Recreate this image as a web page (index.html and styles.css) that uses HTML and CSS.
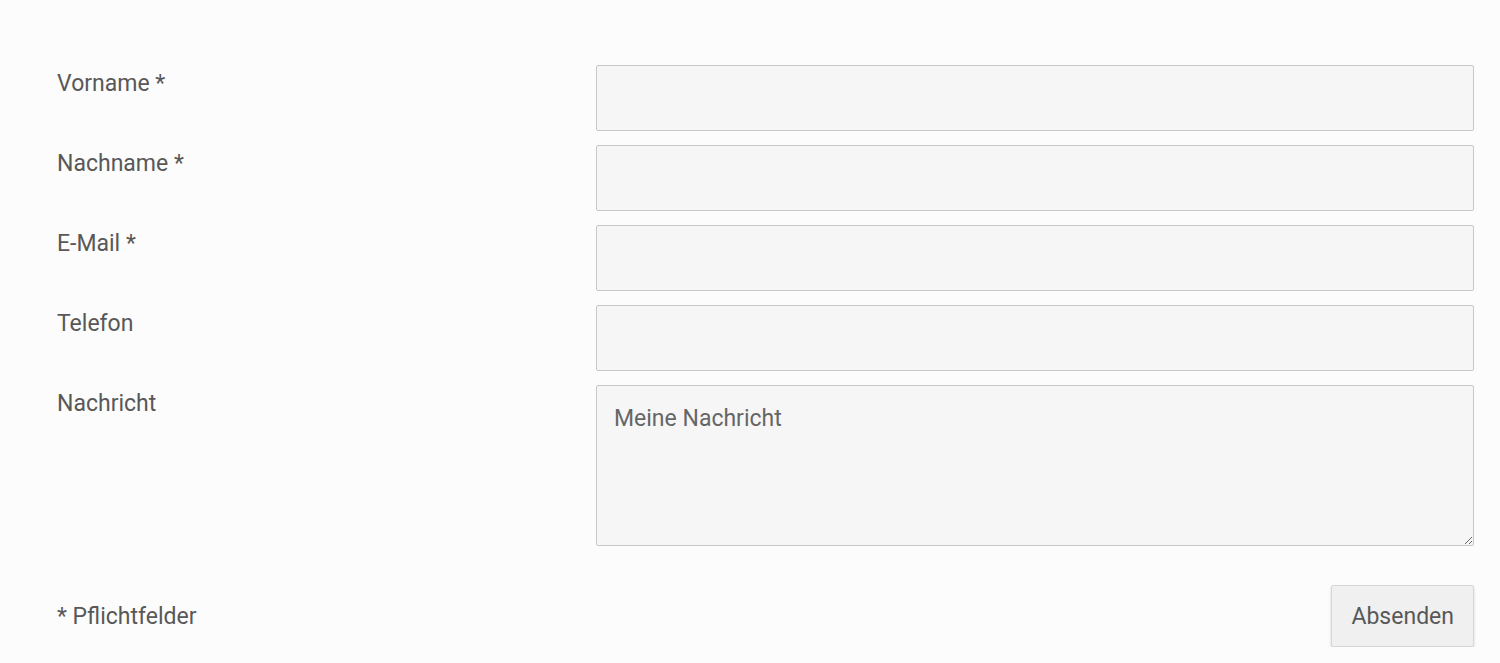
FILE: index.html
```html
<!DOCTYPE html>
<html lang="de">
<head>
    <meta charset="UTF-8">
    <meta name="viewport" content="width=device-width, initial-scale=1.0">
    <title>Kontakt</title>
    <link rel="stylesheet" href="styles.css">
</head>
<body>
    <form class="contact-form">
        <div class="form-row">
            <label for="vorname">Vorname *</label>
            <input type="text" id="vorname" required>
        </div>
        <div class="form-row">
            <label for="nachname">Nachname *</label>
            <input type="text" id="nachname" required>
        </div>
        <div class="form-row">
            <label for="email">E-Mail *</label>
            <input type="email" id="email" required>
        </div>
        <div class="form-row">
            <label for="telefon">Telefon</label>
            <input type="tel" id="telefon">
        </div>
        <div class="form-row">
            <label for="nachricht">Nachricht</label>
            <textarea id="nachricht" placeholder="Meine Nachricht"></textarea>
        </div>

        <div class="form-footer">
            <span class="required-note">* Pflichtfelder</span>
            <button type="submit" class="submit-button">Absenden</button>
        </div>
    </form>
</body>
</html>
```

FILE: styles.css
```css
body {
    margin: 0;
    padding: 0;
    background: #fcfcfc;
    color: #585858;
    font-family: Roboto, 'Liberation Sans', sans-serif;
    font-size: 23px;
}

.contact-form {
    padding: 65px 26px 0 57px;
    display: flex;
    flex-direction: column;
    gap: 14px;
}

.form-row {
    display: grid;
    grid-template-columns: 539px 1fr;
    align-items: start;
}

.form-row label {
    line-height: 1.45;
    padding-top: 2px;
}

.form-row input,
.form-row textarea {
    box-sizing: border-box;
    width: 100%;
    height: 66px;
    margin: 0;
    background: #f6f6f6;
    border: 1px solid #c8c8c8;
    border-radius: 2px;
    font-family: inherit;
    font-size: 23px;
    color: #585858;
    padding: 0 17px;
}

.form-row textarea {
    height: 161px;
    padding: 19px 17px;
    resize: vertical;
    line-height: 1.2;
}

.form-row textarea::placeholder {
    color: #666;
    opacity: 1;
}

.form-footer {
    margin-top: 25px;
    display: flex;
    justify-content: space-between;
    align-items: center;
}

.submit-button {
    height: 62px;
    padding: 0 19px;
    background: #f0f0f0;
    border: 1px solid #d6d6d6;
    border-radius: 2px;
    box-shadow: 0 2px 3px rgba(0, 0, 0, 0.15);
    font-family: inherit;
    font-size: 23px;
    color: #585858;
    cursor: pointer;
}
```
